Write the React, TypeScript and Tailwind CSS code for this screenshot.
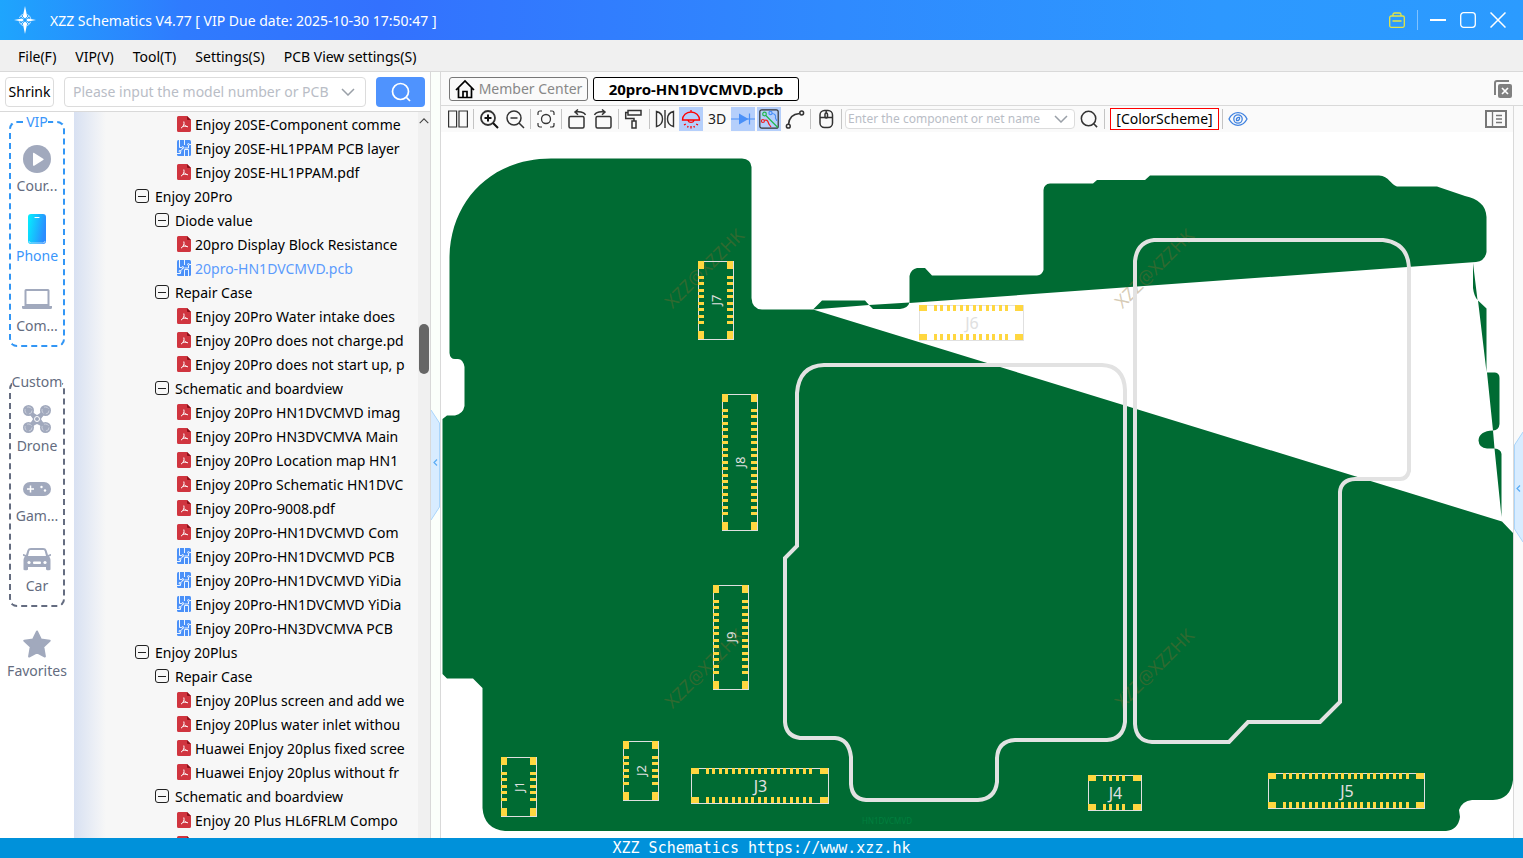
import type { ReactNode } from "react";
import clsx from "clsx";

type NodeKind = "folder" | "pdf" | "pcb";

type TreeRow = {
  kind: NodeKind;
  label: string;
  level?: 1 | 2;
  active?: boolean;
};

const treeRows: TreeRow[] = [
  { kind: "pdf", label: "Enjoy 20SE-Component comme" },
  { kind: "pcb", label: "Enjoy 20SE-HL1PPAM PCB layer" },
  { kind: "pdf", label: "Enjoy 20SE-HL1PPAM.pdf" },
  { kind: "folder", level: 1, label: "Enjoy 20Pro" },
  { kind: "folder", level: 2, label: "Diode value" },
  { kind: "pdf", label: "20pro Display Block Resistance" },
  { kind: "pcb", label: "20pro-HN1DVCMVD.pcb", active: true },
  { kind: "folder", level: 2, label: "Repair Case" },
  { kind: "pdf", label: "Enjoy 20Pro Water intake does" },
  { kind: "pdf", label: "Enjoy 20Pro does not charge.pd" },
  { kind: "pdf", label: "Enjoy 20Pro does not start up, p" },
  { kind: "folder", level: 2, label: "Schematic and boardview" },
  { kind: "pdf", label: "Enjoy 20Pro HN1DVCMVD imag" },
  { kind: "pdf", label: "Enjoy 20Pro HN3DVCMVA Main" },
  { kind: "pdf", label: "Enjoy 20Pro Location map HN1" },
  { kind: "pdf", label: "Enjoy 20Pro Schematic HN1DVC" },
  { kind: "pdf", label: "Enjoy 20Pro-9008.pdf" },
  { kind: "pdf", label: "Enjoy 20Pro-HN1DVCMVD Com" },
  { kind: "pcb", label: "Enjoy 20Pro-HN1DVCMVD PCB" },
  { kind: "pcb", label: "Enjoy 20Pro-HN1DVCMVD YiDia" },
  { kind: "pcb", label: "Enjoy 20Pro-HN1DVCMVD YiDia" },
  { kind: "pcb", label: "Enjoy 20Pro-HN3DVCMVA PCB" },
  { kind: "folder", level: 1, label: "Enjoy 20Plus" },
  { kind: "folder", level: 2, label: "Repair Case" },
  { kind: "pdf", label: "Enjoy 20Plus screen and add we" },
  { kind: "pdf", label: "Enjoy 20Plus water inlet withou" },
  { kind: "pdf", label: "Huawei Enjoy 20plus fixed scree" },
  { kind: "pdf", label: "Huawei Enjoy 20plus without fr" },
  { kind: "folder", level: 2, label: "Schematic and boardview" },
  { kind: "pdf", label: "Enjoy 20 Plus HL6FRLM Compo" },
  { kind: "pdf", label: "" },
];

const menus = ["File(F)", "VIP(V)", "Tool(T)", "Settings(S)", "PCB View settings(S)"];

const watermarks = [
  [704, 268],
  [1154, 268],
  [704, 668],
  [1154, 668],
];

type Connector = { name: string; x: number; y: number; length: number; vertical?: boolean };

const connectors: Connector[] = [
  { name: "J1", x: 501, y: 757, length: 59, vertical: true },
  { name: "J2", x: 623, y: 741, length: 59, vertical: true },
  { name: "J3", x: 691, y: 768, length: 137 },
  { name: "J4", x: 1088, y: 775, length: 53 },
  { name: "J5", x: 1268, y: 773, length: 156 },
  { name: "J6", x: 919, y: 305, length: 104 },
  { name: "J7", x: 698, y: 261, length: 78, vertical: true },
  { name: "J8", x: 722, y: 394, length: 136, vertical: true },
  { name: "J9", x: 713, y: 585, length: 104, vertical: true },
];

/* ---------- icons ---------- */

const Glyph = ({ children, className = "size-5" }: { children: ReactNode; className?: string }) => (
  <svg
    viewBox="0 0 20 20"
    className={clsx("shrink-0", className)}
    fill="none"
    stroke="currentColor"
    strokeWidth="1.5"
    aria-hidden="true"
  >
    {children}
  </svg>
);

const StarLogo = () => (
  <svg viewBox="0 0 26 30" className="h-[30px] w-[26px]" aria-hidden="true">
    <path fill="#fff" d="M12 1 9.8 11.5 12 13.5 14.2 11.5ZM12 29 9.8 18.5 12 16.5 14.2 18.5ZM1 15l8-1.6L10.8 15 9 16.6ZM23 15l-8-1.6L13.2 15 15 16.6Z" />
    <circle cx="12" cy="15" r="6" fill="none" stroke="#bfe3ff" strokeWidth="1" strokeDasharray="6 3.4" strokeDashoffset="-1.7" />
    <path stroke="#bfe3ff" strokeWidth="1" d="m8 11 2.5 2.5m3 3L16 19m0-8-2.5 2.5m-3 3L8 19" />
  </svg>
);

const PdfIcon = () => (
  <svg viewBox="0 0 14 16" className="h-4 w-3.5 shrink-0" aria-hidden="true">
    <path fill="#d0353f" d="M1.5 0H10l4 4v10.5a1.500 1.500 0 0 1-1.500 1.500h-11A1.500 1.500 0 0 1 0 14.500v-13A1.500 1.500 0 0 1 1.500 0Z" />
    <path fill="#8d1019" d="M10 0l4 4h-3a1 1 0 0 1-1-1Z" />
    <path fill="none" stroke="#fff" strokeWidth="1" d="M6.800 5.500c.8 2.600-.2 4.700-2.800 6.700M7.300 8.600c.9 1.500 2.100 2 3.700 2.200M5.600 10.800c1.500-.7 2.700-.8 4.200-.4" />
  </svg>
);

const PcbIcon = () => (
  <svg viewBox="0 0 14 16" className="h-4 w-3.5 shrink-0" aria-hidden="true">
    <rect width="14" height="16" rx="1.500" fill="#4a90f8" />
    <g fill="none" stroke="#fff" strokeWidth="0.900">
      <path d="M2.500 0v7.500h2.200M7.500 0v5M14 4.500h-1.500M11.500 5.500V8h-4M6.500 8 3.800 10.500M7.500 16v-6.500M11.500 16v-6.500h-4M3.500 12v1.500H0" />
      <circle cx="5.700" cy="7.500" r="0.900" />
      <circle cx="11.500" cy="4.500" r="0.900" />
      <circle cx="3" cy="11.200" r="0.900" />
    </g>
  </svg>
);

const CollapseBox = () => (
  <svg viewBox="0 0 14 14" className="size-3.5 shrink-0" fill="none" stroke="#222" aria-hidden="true">
    <rect x="0.500" y="0.500" width="13" height="13" rx="2.500" />
    <path d="M3 7.500h8" />
  </svg>
);

const Chevron = ({ className = "h-2 w-3.5" }: { className?: string }) => (
  <svg viewBox="0 0 14 8" className={clsx("shrink-0", className)} fill="none" stroke="currentColor" strokeWidth="1.500" aria-hidden="true">
    <path d="m1 1 6 6 6-6" />
  </svg>
);

const SearchGlyph = ({ className = "size-5" }: { className?: string }) => (
  <Glyph className={className}>
    <circle cx="9.500" cy="9.500" r="8" strokeWidth="1.700" />
    <path d="m15.500 15.500 3.500 3.500" strokeWidth="1.700" />
  </Glyph>
);

/* ---------- left category bar ---------- */

const PlayIcon = () => (
  <svg viewBox="0 0 28 28" className="size-7">
    <circle cx="14" cy="14" r="14" fill="#a1a9bd" />
    <path fill="#fff" d="M10 8.500v11.500c0 .8.600 1 1.200.7l9-5.600c.6-.4.6-1 0-1.400l-9-5.700c-.6-.4-1.200-.2-1.200.5Z" />
  </svg>
);

const PhoneIcon = () => (
  <svg viewBox="0 0 18 30" className="h-[30px] w-[18px]">
    <defs>
      <linearGradient id="phone" x1="0" y1="0" x2="1" y2="0.300">
        <stop offset="0" stopColor="#04f1fd" />
        <stop offset="1" stopColor="#2a8dff" />
      </linearGradient>
    </defs>
    <rect width="18" height="30" rx="3" fill="url(#phone)" />
    <path stroke="#fff" strokeWidth="1.200" strokeLinecap="round" d="M7 3.500h4" />
    <path fill="none" stroke="#bfe6ff" strokeWidth="0.800" d="M1 27q0 2 2.500 2h11q2.500 0 2.500-2" />
  </svg>
);

const LaptopIcon = () => (
  <svg viewBox="0 0 30 20" className="h-5 w-[30px]" fill="#a1a9bd">
    <path fillRule="evenodd" d="M4 0h22a1.500 1.500 0 0 1 1.500 1.500V17h-25V1.500A1.500 1.500 0 0 1 4 0Zm.5 2v13h21V2Z" />
    <path d="M0 17h30v1.500a1.500 1.500 0 0 1-1.500 1.500h-27A1.500 1.500 0 0 1 0 18.500Z" />
  </svg>
);

const DroneIcon = () => (
  <svg viewBox="0 0 28 28" className="size-7">
    <g stroke="#a1a9bd" strokeWidth="4">
      <path d="m6 6 16 16M22 6 6 22" />
    </g>
    {[[5.5, 5.5], [22.5, 5.5], [5.5, 22.5], [22.5, 22.5]].map(([x, y]) => (
      <g key={`${x}-${y}`}>
        <circle cx={x} cy={y} r="5.500" fill="#a1a9bd" />
        <circle cx={x} cy={y} r="3.500" fill="none" stroke="#d5d9e3" strokeWidth="0.800" strokeDasharray="5 2.300" />
      </g>
    ))}
    <path fill="#a1a9bd" d="m10 8 4 2 4-2 2 3-2 3 2 4-2 3-4-2-4 2-2-3 2-4-2-3Z" />
    <circle cx="14" cy="14" r="2.500" fill="#a1a9bd" stroke="#fff" strokeWidth="1" />
  </svg>
);

const GamepadIcon = () => (
  <svg viewBox="0 0 28 14" className="h-3.5 w-7">
    <rect width="28" height="14" rx="7" fill="#a1a9bd" />
    <path stroke="#fff" strokeWidth="1.500" d="M7.500 3.500v7M4 7h7" />
    <circle cx="18.500" cy="5" r="1.200" fill="#fff" />
    <circle cx="22" cy="8.500" r="1.200" fill="#fff" />
  </svg>
);

const CarIcon = () => (
  <svg viewBox="0 0 28 24" className="h-6 w-7">
    <path
      fill="#a1a9bd"
      fillRule="evenodd"
      d="M8 1h12c2 0 3 .8 3.600 2.500L25 8l2.500-1c.8 0 .8 2 0 2l-1.500.5c1 1 1.500 2 1.500 4V22c0 .8-.5 1.200-1.200 1.200h-2.100c-.7 0-1.200-.4-1.200-1.200v-2H5v2c0 .8-.5 1.200-1.200 1.200H1.700c-.7 0-1.200-.4-1.200-1.200v-8.500c0-2 .5-3 1.500-4L.5 9c-.8 0-.8-2 0-2L3 8l1.400-4.500C5 1.800 6 1 8 1Zm0 2c-1 0-1.500.4-1.800 1.300L5 9h18l-1.200-4.700C21.500 3.400 21 3 20 3Z"
    />
    <g fill="#fff">
      <circle cx="6" cy="15.500" r="1.600" />
      <circle cx="22" cy="15.500" r="1.600" />
      <rect x="10" y="14.500" width="8" height="2.500" rx="1" />
    </g>
  </svg>
);

const FavoriteIcon = () => (
  <svg viewBox="0 0 28 28" className="size-7">
    <path fill="#a1a9bd" stroke="#a1a9bd" strokeWidth="2" strokeLinejoin="round" d="m14 1.500 3.900 8 8.800 1.200-6.400 6.100 1.600 9.700-7.900-4.200-7.900 4.200 1.600-9.700-6.400-6.100 8.800-1.200Z" />
  </svg>
);

const CategoryButton = ({ icon, label, active }: { icon: ReactNode; label: string; active?: boolean }) => (
  <button
    type="button"
    className={clsx(
      "flex h-[70px] w-full flex-col items-center text-[14px] leading-5",
      active ? "text-[#3a96fb]" : "text-[#646c80]"
    )}
  >
    <span className="flex h-[38px] items-center pt-1">{icon}</span>
    <span className="flex h-5 items-center whitespace-nowrap">{label}</span>
  </button>
);

const CategoryGroup = ({ title, blue, children }: { title: string; blue?: boolean; children: ReactNode }) => (
  <fieldset
    className={clsx(
      "mx-[9px] h-[235px] rounded-lg border-2 border-dashed px-0 text-center text-[14px] leading-5",
      blue ? "border-[#3296f5] text-[#3a96fb]" : "border-[#646c80] text-[#646c80]"
    )}
  >
    <legend className="mx-auto h-5">{title}</legend>
    <div className="mt-1.5">{children}</div>
  </fieldset>
);

const CategoryBar = () => (
  <nav className="w-[74px] shrink-0 bg-white">
    <CategoryGroup title="VIP" blue>
      <CategoryButton icon={<PlayIcon />} label="Cour..." />
      <CategoryButton icon={<PhoneIcon />} label="Phone" active />
      <CategoryButton icon={<LaptopIcon />} label="Com..." />
    </CategoryGroup>
    <div className="mt-[25px]">
      <CategoryGroup title="Custom">
        <CategoryButton icon={<DroneIcon />} label="Drone" />
        <CategoryButton icon={<GamepadIcon />} label="Gam..." />
        <CategoryButton icon={<CarIcon />} label="Car" />
      </CategoryGroup>
    </div>
    <div className="mt-4">
      <CategoryButton icon={<FavoriteIcon />} label="Favorites" />
    </div>
  </nav>
);

/* ---------- file tree ---------- */

const FileTree = () => (
  <div className="flex min-w-0 flex-1 bg-[#f7f7f7]">
    <div className="w-8 shrink-0 bg-linear-to-r from-[#d8e1f2] to-[#f7f7f7]" />
    <ul className="min-w-0 flex-1 overflow-hidden">
      {treeRows.map((row, i) => (
        <li
          key={i}
          className={clsx(
            "flex h-6 items-center text-[14px] whitespace-nowrap",
            row.kind !== "folder" && "gap-1 pl-[71px]",
            row.level === 1 && "gap-1.5 pl-[29px]",
            row.level === 2 && "gap-1.5 pl-[49px]",
            row.active ? "text-[#5b9bfd]" : "text-black"
          )}
        >
          {row.kind === "folder" && <CollapseBox />}
          {row.kind === "pdf" && <PdfIcon />}
          {row.kind === "pcb" && <PcbIcon />}
          <span>{row.label}</span>
        </li>
      ))}
    </ul>
    <div className="flex w-3 shrink-0 flex-col items-center bg-[#f0f0f0]">
      <Chevron className="mt-1.5 h-1.5 w-2.5 rotate-180 text-[#444]" />
      <div className="mt-[200px] h-[50px] w-2.5 rounded-full bg-[#666]" />
    </div>
  </div>
);

const Sidebar = () => (
  <aside className="flex w-[431px] shrink-0 flex-col border-r border-[#d9d9d9] bg-white">
    <form className="flex h-10 shrink-0 items-center border-b border-[#d9d9d9] px-[5px] text-[14px]">
      <button type="button" className="h-[30px] w-[49px] rounded-sm border border-[#dcdcdc]">
        Shrink
      </button>
      <div className="ml-2.5 flex h-[30px] flex-1 items-center rounded-sm border border-[#dcdcdc] pr-2.5 pl-2 text-[#9aa0a8]">
        <input
          aria-label="Model number"
          placeholder="Please input the model number or PCB"
          className="min-w-0 flex-1 outline-none placeholder:text-[#b9bdc6]"
        />
        <Chevron />
      </div>
      <button type="submit" aria-label="Search" className="ml-2.5 flex h-[30px] w-[49px] items-center justify-center rounded-sm bg-[#4f93fe] text-white">
        <SearchGlyph />
      </button>
    </form>
    <div className="flex min-h-0 flex-1 overflow-hidden">
      <CategoryBar />
      <FileTree />
    </div>
  </aside>
);

/* ---------- board toolbar ---------- */

const ToolButton = ({ label, on, children }: { label: string; on?: boolean; children: ReactNode }) => (
  <button
    type="button"
    aria-label={label}
    className={clsx("flex h-6 w-6 shrink-0 items-center justify-center text-[#333]", on && "bg-[#b5cffb]")}
  >
    {children}
  </button>
);

const Separator = () => <span className="mx-px h-5 w-px shrink-0 bg-[#c4c4c4]" />;

const Toolbar = () => (
  <div className="flex h-[26px] shrink-0 items-center gap-0.5 bg-[#fafafa] pr-1.5 pl-[5px]">
    <ToolButton label="Split view">
      <Glyph>
        <path strokeWidth="1.200" d="M.6 2h8v16h-8ZM11 2h8.400v16H11Z" />
      </Glyph>
    </ToolButton>
    <Separator />
    <ToolButton label="Zoom in">
      <Glyph>
        <circle cx="9" cy="9" r="7" strokeWidth="1.800" />
        <path strokeWidth="2" stroke="#111" d="M14 14l5 5M9 5.500v7M5.500 9h7" />
      </Glyph>
    </ToolButton>
    <ToolButton label="Zoom out">
      <Glyph>
        <circle cx="9" cy="9" r="7" />
        <path d="M14 14l5 5M5.500 9h7" />
      </Glyph>
    </ToolButton>
    <Separator />
    <ToolButton label="Fit to window">
      <Glyph>
        <circle cx="10" cy="10" r="4.500" strokeWidth="1.300" />
        <path strokeWidth="1.200" d="M2 6V4a2 2 0 0 1 2-2h2m8 0h2a2 2 0 0 1 2 2v2m0 8v2a2 2 0 0 1-2 2h-2m-8 0H4a2 2 0 0 1-2-2v-2" />
      </Glyph>
    </ToolButton>
    <Separator />
    <ToolButton label="Rotate left">
      <Glyph>
        <rect x="2" y="7.500" width="15" height="11.500" rx="1.500" />
        <path d="M18.500 6c-1.500-3-5-3.800-10.500-3M11 .5 8 3l3 2.700" />
      </Glyph>
    </ToolButton>
    <ToolButton label="Rotate right">
      <Glyph>
        <rect x="3" y="7.500" width="15" height="11.500" rx="1.500" />
        <path d="M1.500 6C3 3 6.500 2.200 12 3M9 .5 12 3 9 5.700" />
      </Glyph>
    </ToolButton>
    <Separator />
    <ToolButton label="Paint">
      <Glyph>
        <path d="M4 1.500h13v4.500H4ZM4 3.500H1.700V9.500H10V12M8 12h4v7H8Z" />
      </Glyph>
    </ToolButton>
    <Separator />
    <ToolButton label="Flip">
      <Glyph>
        <path strokeWidth="1.400" d="M1.500 2.500v15c4-1 6-3 6-7.500s-2-6.500-6-7.500ZM18.500 2.500v15c-4-1-6-3-6-7.500s2-6.500 6-7.500ZM10 1v18" />
      </Glyph>
    </ToolButton>
    <ToolButton label="Light" on>
      <Glyph>
        <g stroke="#f00">
          <path strokeWidth="1.300" d="M1.500 11a8.500 8 0 0 1 17 0ZM10 3V1M7 11.500a3.200 3 0 0 0 6 0M3 16l1.800-1M17 16l-1.800-1M6.500 18.500l.7-1.500M13.500 18.500l-.7-1.500M10 17v2.500" />
        </g>
      </Glyph>
    </ToolButton>
    <button type="button" className="h-6 w-6 shrink-0 text-[14px] leading-6 text-[#222]">
      3D
    </button>
    <ToolButton label="Diode" on>
      <svg viewBox="0 0 24 20" className="h-5 w-6" aria-hidden="true">
        <path fill="#4a90f8" d="M8 4.500 17.500 10 8 15.500Z" />
        <path stroke="#4a90f8" strokeWidth="1.200" d="M0 10h24M18.500 4.500v11" />
      </svg>
    </ToolButton>
    <ToolButton label="Nets" on>
      <Glyph>
        <rect x="0.800" y="0.800" width="18.400" height="18.400" rx="2" strokeWidth="1.200" />
        <g strokeWidth="1.200">
          <path stroke="#20b84a" d="m6.800 6.500 12 12" />
          <circle cx="5.500" cy="5" r="1.800" stroke="#20b84a" />
          <path stroke="#4a90f8" d="M13 4.500c3 0 4 2 3.500 4.200-.3 1.500 1.300 1.800 1.300 3.300" />
          <circle cx="11.500" cy="4" r="1.600" stroke="#4a90f8" />
          <path stroke="#f02020" d="M5.300 11.500c2-1 3.500 0 4 2s1.500 2.500 2.700 4.500" />
          <circle cx="3.900" cy="12" r="1.500" stroke="#f02020" />
        </g>
      </Glyph>
    </ToolButton>
    <ToolButton label="Curve">
      <Glyph>
        <path strokeWidth="1.600" d="M3.500 15.500C4 8.500 7 5 14.500 4.500" />
        <circle cx="16.700" cy="4" r="1.900" />
        <circle cx="3.300" cy="17.200" r="1.900" />
      </Glyph>
    </ToolButton>
    <Separator />
    <ToolButton label="Mouse">
      <Glyph>
        <rect x="4" y="1.500" width="12.500" height="17" rx="4.500" />
        <path d="M4 8.500h12.500M10.200 1.500V4" />
        <rect x="9" y="4" width="2.500" height="5" rx="1.200" />
      </Glyph>
    </ToolButton>
    <Separator />
    <div className="flex h-5 w-[230px] items-center rounded-sm border border-[#dcdcdc] bg-white pr-1.5 pl-0.5 text-[#9aa0a8]">
      <input
        aria-label="Component or net name"
        placeholder="Enter the component or net name"
        className="mr-1.5 min-w-0 flex-1 text-[12px] outline-none placeholder:text-[#b9bdc6]"
      />
      <Chevron />
    </div>
    <ToolButton label="Find">
      <SearchGlyph className="size-[18px]" />
    </ToolButton>
    <Separator />
    <button type="button" className="ml-0.5 h-[22px] w-[109px] shrink-0 border border-[#f00] bg-white text-[14px] leading-5 whitespace-nowrap">
      [ColorScheme]
    </button>
    <Separator />
    <ToolButton label="Visibility">
      <svg viewBox="0 0 20 16" className="h-4 w-5" fill="none" stroke="#3f82e0" strokeWidth="1.300" aria-hidden="true">
        <path d="M1 8c2-4 5-6.300 9-6.300S17 4 19 8c-2 4-5 6.300-9 6.300S3 12 1 8Z" />
        <circle cx="10" cy="8" r="4.200" />
        <path d="M8.500 9.500C8 7.500 9.500 6 11.500 6.500 12 8.500 10.500 10 8.500 9.500Z" />
      </svg>
    </ToolButton>
    <button type="button" aria-label="Toggle panel" className="ml-auto text-[#777]">
      <svg viewBox="0 0 22 18" className="h-[18px] w-[22px]" fill="none" stroke="currentColor" aria-hidden="true">
        <path strokeWidth="2" d="M1 1h20v16H1Z" />
        <path strokeWidth="1.300" d="M7.500 1v16M11 5.500h6M11 9h6M11 12.500h6" />
      </svg>
    </button>
  </div>
);

/* ---------- board ---------- */

const PAD_PITCH = 6.45;

const ConnectorShape = ({ name, x, y, length, vertical }: Connector) => {
  const count = Math.floor((length - 33) / PAD_PITCH + 0.5) + 1;
  const pads = [
    { at: 0, size: 8 },
    ...Array.from({ length: count }, (_, i) => ({ at: Math.round(15 + i * PAD_PITCH), size: 3 })),
    { at: length - 8, size: 8 },
  ];
  const depth = 35;
  const cx = vertical ? x + 18 : x + length / 2 + 1;
  const cy = vertical ? y + length / 2 : y + 18;

  return (
    <g>
      <rect
        x={x + 0.5}
        y={y + 0.5}
        width={vertical ? depth : length}
        height={vertical ? length : depth}
        fill="none"
        stroke="#e0e0e0"
      />
      <g fill="#ffd740" shapeRendering="crispEdges">
        {pads.map((pad) =>
          [0, depth - 6].map((side) => (
            <rect
              key={`${pad.at}-${side}`}
              x={vertical ? x + side : x + pad.at}
              y={vertical ? y + pad.at : y + side}
              width={vertical ? 6 : pad.size}
              height={vertical ? pad.size : 6}
            />
          ))
        )}
      </g>
      <text
        x={cx}
        y={cy}
        dominantBaseline="central"
        textAnchor="middle"
        fill="#e0e0e0"
        fontSize={vertical ? 13 : 16}
        transform={vertical ? `rotate(-90 ${cx} ${cy})` : undefined}
      >
        {name}
      </text>
    </g>
  );
};

const Board = () => (
  <div className="min-h-0 flex-1 bg-white">
    <svg viewBox="441 132 1072 706" className="block size-full" role="img" aria-label="Board layout">
      <g fill="#006b33">
        <path d="M551 158.500H742Q751 159 751.500 167V298Q752 309 762 309.500H813L1502 521.500 1513 533V780Q1511 799 1493 800H1472Q1462 801 1459 810L1460 817Q1458 830 1446 831H505Q484 829 482.500 808V688L473 678.500H447L442.500 674V419L447 415.500H455Q463 414 464.500 406V367Q463 359 458 359H455Q450 359 449.500 353V258C450 202 490 158.500 551 158.500Z" />
        <path d="M909.500 303V276Q911 269 917 268H925L932 275.500H1037Q1042 275 1043.500 270V190Q1044 184 1050 183.500H1093L1097 180H1145L1150 175.500H1379C1389 176 1391 185 1397 186.500H1437L1465 196C1478 199 1486 205 1486.500 217V252Q1485 261 1476 262Z" />
        <path d="M813 309.500 822 300.500H865L869 305ZM869 305 873 309H900Q908 308 909.500 302.500Z" />
        <path d="M1473 263V288Q1474 296 1477.500 300ZM1478 300.500 1486.500 308.500V372ZM1487 372.500H1495Q1499.500 373 1499.500 378V424Q1499 430 1493 430.500ZM1493 430.500Q1479 431 1478.500 440.500 1479 448 1487 448.500H1494.500ZM1494.500 448.500Q1501 449 1501.500 454V517Z" />
      </g>

      <g fill="#8a6a2c" fillOpacity="0.350" fontSize="18" textAnchor="middle" dominantBaseline="central">
        {watermarks.map(([x, y]) => (
          <text key={`${x}-${y}`} x={x} y={y} transform={`rotate(-45 ${x} ${y})`}>
            XZZ@XZZHK
          </text>
        ))}
      </g>
      <text x="862" y="824" fontSize="8" fill="#007f3f">
        HN1DVCMVD
      </text>

      <g fill="none" stroke="#e2e2e2" strokeWidth="4">
        <path d="M824 365H1102Q1124 366 1125 390V722Q1123 739 1107 740H1015Q998 741 997 758V782Q995 799 978 800H866Q852 799 851 784V757Q849 739 835 738H800Q786 736 785 722V558L797 546V393Q799 366 824 365Z" />
        <path d="M1154 240H1383Q1408 243 1409 268V471Q1407 479 1400 479H1355Q1341 480 1340 492V702L1320 722H1248L1229 742H1152Q1136 741 1135 724V261Q1137 242 1154 240Z" />
      </g>

      {connectors.map((connector) => (
        <ConnectorShape key={connector.name} {...connector} />
      ))}
    </svg>
  </div>
);

const CollapseHandle = ({ label, flip }: { label: string; flip?: boolean }) => (
  <button type="button" aria-label={label}>
    <svg viewBox="0 0 9 110" className="block h-[110px] w-[9px]" aria-hidden="true">
      <path
        fill="#d8ecff"
        stroke="#a9d5fb"
        d={flip ? "M9 0 .5 13V97L9 110" : "M0 0 8.500 13V97L0 110"}
      />
      <path fill="none" stroke="#5bacf5" strokeWidth="1.200" d={flip ? "M6 53.500 3 56.500l3 3" : "M6 49.500 3 52.500l3 3"} />
    </svg>
  </button>
);

const BoardView = () => (
  <main className="flex min-w-0 flex-1 flex-col">
    <div className="flex h-[34px] shrink-0 items-center gap-[5px] border-b border-l border-[#d9d9d9] bg-[#fafafa] pr-[11px] pl-2">
      <button type="button" className="flex h-6 w-[139px] items-center justify-center gap-1 rounded-[3px] border border-[#777] text-[14px] whitespace-nowrap text-[#888]">
        <Glyph className="size-5 text-black">
          <path strokeWidth="1.700" d="M1 11 10 2l9 9M3.500 9v9.500h13V9M8 18v-5.500h4V18" />
        </Glyph>
        Member Center
      </button>
      <button type="button" className="h-6 w-[206px] rounded-[3px] border border-black bg-white text-[15px] leading-5 font-bold">
        20pro-HN1DVCMVD.pcb
      </button>
      <button type="button" aria-label="Close all" className="ml-auto text-[#808080]">
        <svg viewBox="0 0 18 18" className="size-[18px]" aria-hidden="true">
          <path fill="none" stroke="currentColor" strokeWidth="2" d="M1 15V3a2 2 0 0 1 2-2h12" />
          <rect x="4" y="4" width="14" height="14" rx="2" fill="currentColor" />
          <path stroke="#fff" strokeWidth="1.700" d="m8 8 6 6m0-6-6 6" />
        </svg>
      </button>
    </div>
    <div className="flex min-h-0 flex-1">
      <div className="flex min-w-0 flex-1 flex-col border-x border-[#d9d9d9]">
        <Toolbar />
        <Board />
      </div>
      <div className="flex w-[9px] shrink-0 items-center bg-[#fafafa] pt-[30px]">
        <CollapseHandle label="Expand right panel" flip />
      </div>
    </div>
  </main>
);

/* ---------- window ---------- */

const TitleBar = () => (
  <header className="flex h-10 shrink-0 items-center bg-[linear-gradient(90deg,#1ea5fd_0%,#2f7bfe_12%,#3371fe_25%,#2f8afe_55%,#2d98ff_80%,#2b9bff_100%)] pr-[17px] pl-[13px] text-white">
    <StarLogo />
    <h1 className="ml-[11px] text-[14px]">XZZ Schematics V4.77 [ VIP Due date: 2025-10-30 17:50:47 ]</h1>
    <div className="ml-auto flex items-center">
      <button type="button" aria-label="Toolbox" className="text-[#e3e545]">
        <svg viewBox="0 0 16 16" className="size-4" fill="none" stroke="currentColor" strokeWidth="1.300" aria-hidden="true">
          <rect x="0.700" y="4" width="14.600" height="11.300" rx="1.500" />
          <path d="M4 4V2.500A1.500 1.500 0 0 1 5.500 1h5A1.500 1.500 0 0 1 12 2.500V4M3.500 9h9" />
        </svg>
      </button>
      <span className="mx-3 h-5 w-px bg-white/40" />
      <div className="flex gap-3.5">
        <button type="button" aria-label="Minimize">
          <svg viewBox="0 0 16 16" className="size-4" stroke="#fff" strokeWidth="2" aria-hidden="true">
            <path d="M0 8h16" />
          </svg>
        </button>
        <button type="button" aria-label="Maximize">
          <svg viewBox="0 0 16 16" className="size-4" fill="none" stroke="#fff" strokeWidth="1.300" aria-hidden="true">
            <rect x="0.700" y="0.700" width="14.600" height="14.600" rx="3" />
          </svg>
        </button>
        <button type="button" aria-label="Close">
          <svg viewBox="0 0 16 16" className="size-4" stroke="#fff" strokeWidth="1.500" aria-hidden="true">
            <path d="m.5.5 15 15m0-15-15 15" />
          </svg>
        </button>
      </div>
    </div>
  </header>
);

const App = () => {
  return (
    <div className="flex h-screen flex-col overflow-hidden font-['Noto_Sans','Open_Sans',sans-serif] text-black">
      <TitleBar />
      <nav className="flex h-8 shrink-0 items-center gap-[19px] border-b border-[#d9d9d9] bg-[#f0f0f0] pt-0.5 pl-[18px] text-[14px]">
        {menus.map((menu) => (
          <button key={menu} type="button">
            {menu}
          </button>
        ))}
      </nav>
      <div className="flex min-h-0 flex-1">
        <Sidebar />
        <div className="flex w-[9px] shrink-0 items-center bg-[#fbfffb] pt-5">
          <CollapseHandle label="Collapse sidebar" />
        </div>
        <BoardView />
      </div>
      <footer className="h-5 shrink-0 bg-[#0091da] text-center font-['DejaVu_Sans_Mono',monospace] text-[15px] leading-5 text-white">
        XZZ Schematics https://www.xzz.hk
      </footer>
    </div>
  );
};

export default App;
